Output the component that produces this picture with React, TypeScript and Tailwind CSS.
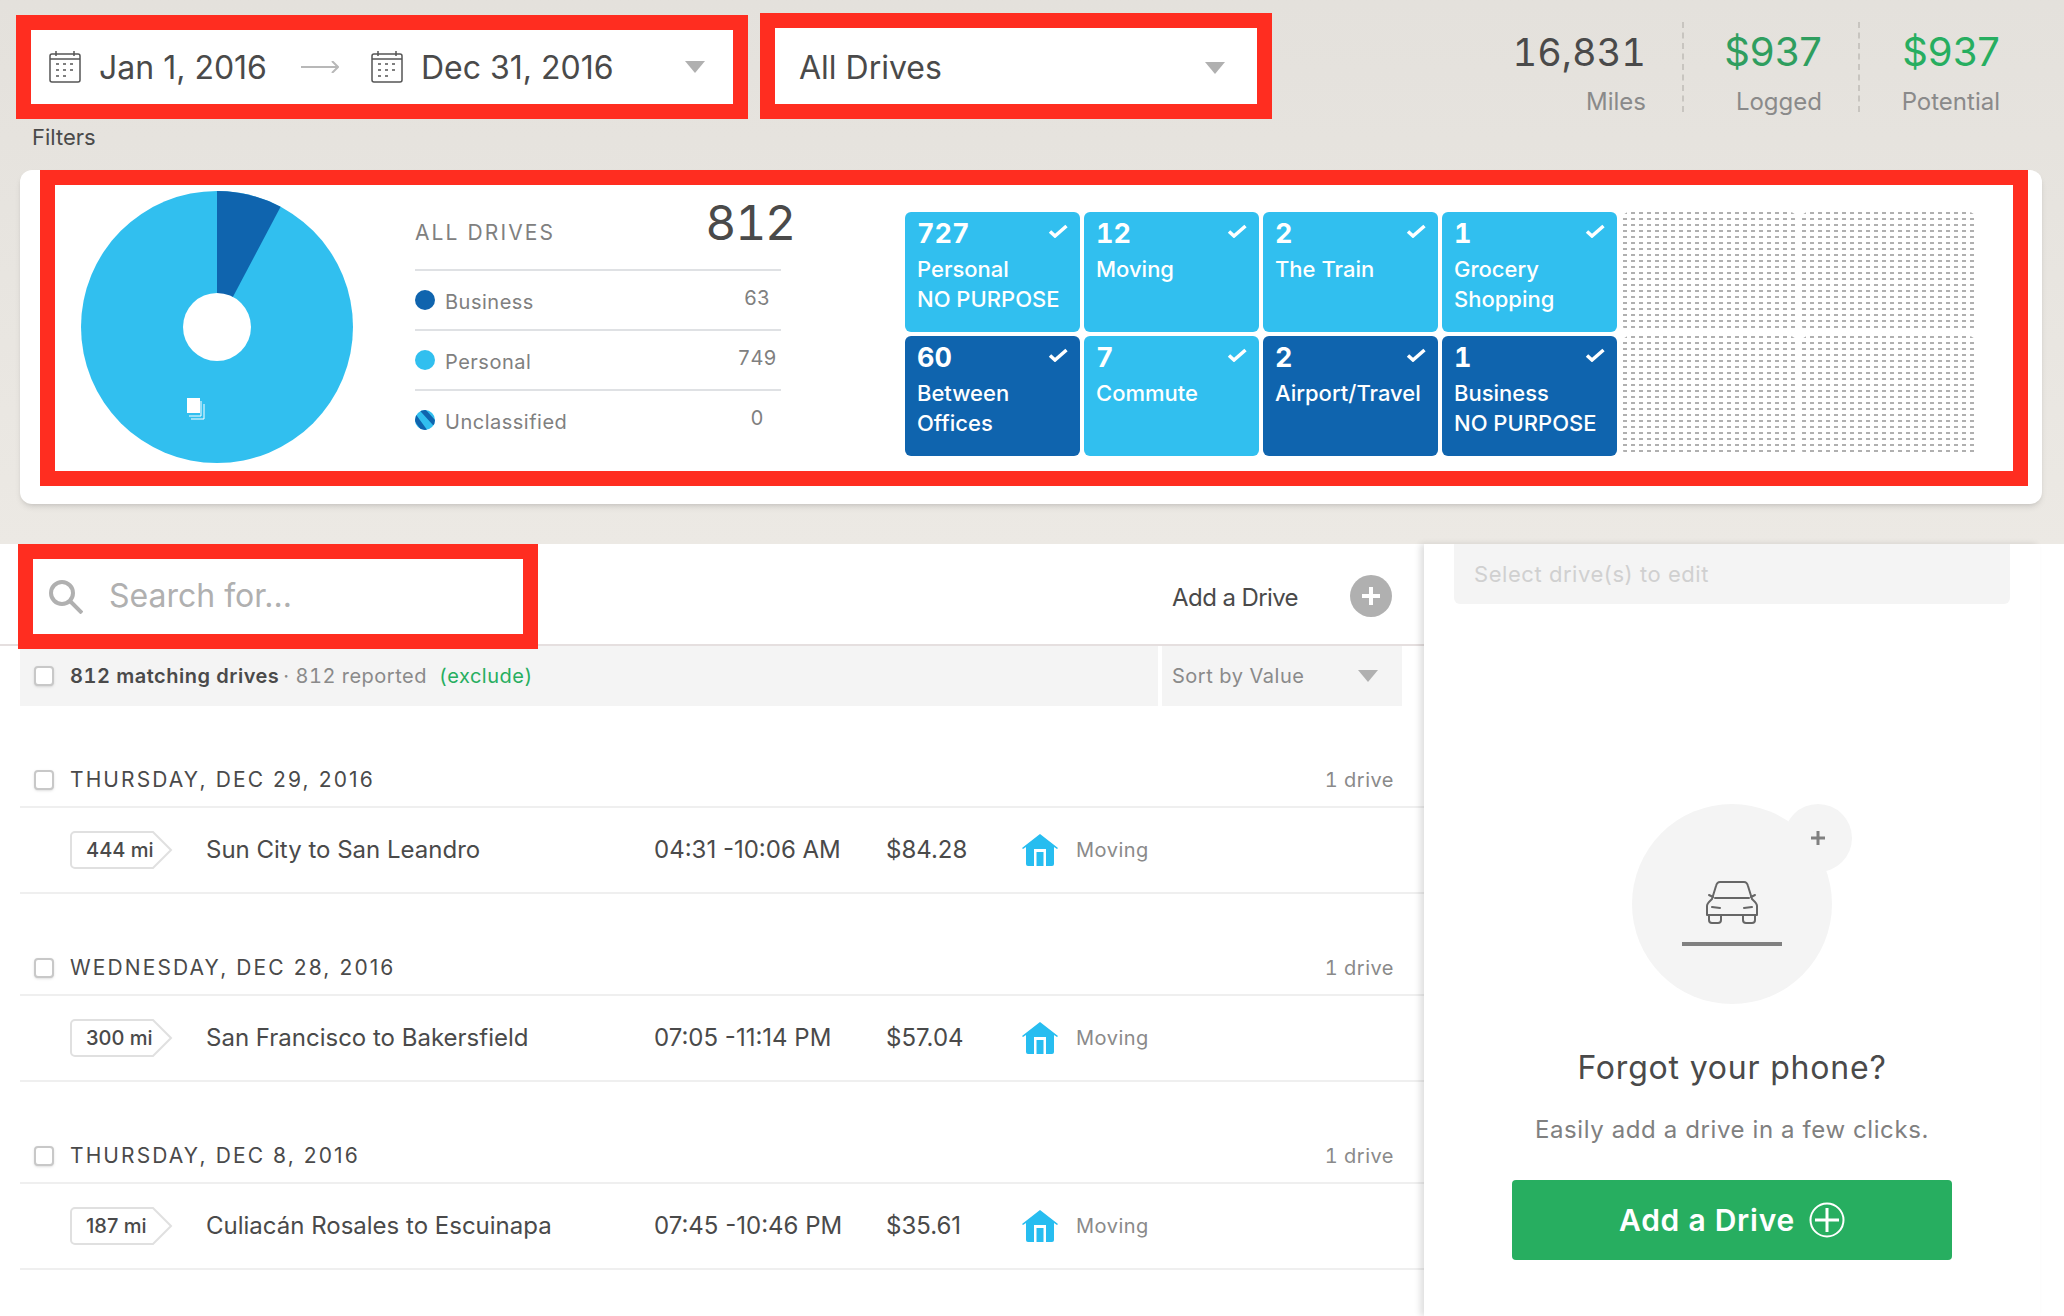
import React from "react";

const tiles = [
  { count: "727", lines: ["Personal", "NO PURPOSE"], dark: false },
  { count: "12", lines: ["Moving"], dark: false },
  { count: "2", lines: ["The Train"], dark: false },
  { count: "1", lines: ["Grocery", "Shopping"], dark: false },
  { count: "60", lines: ["Between", "Offices"], dark: true },
  { count: "7", lines: ["Commute"], dark: false },
  { count: "2", lines: ["Airport/Travel"], dark: true },
  { count: "1", lines: ["Business", "NO PURPOSE"], dark: true },
];

const drives = [
  { day: "Thursday, Dec 29, 2016", miles: "444 mi", route: "Sun City to San Leandro", time: "04:31 -10:06 AM", value: "$84.28" },
  { day: "Wednesday, Dec 28, 2016", miles: "300 mi", route: "San Francisco to Bakersfield", time: "07:05 -11:14 PM", value: "$57.04" },
  { day: "Thursday, Dec 8, 2016", miles: "187 mi", route: "Culiacán Rosales to Escuinapa", time: "07:45 -10:46 PM", value: "$35.61" },
];

function CalendarIcon() {
  return (
    <svg viewBox="0 0 32 32" className="h-8 w-8 shrink-0" fill="none" stroke="#555" strokeWidth="1.5">
      <rect x="1" y="3" width="30" height="28" rx="2" />
      <path d="M7 0v5M25 0v5M1 8h30" />
      <path d="M7 13h3M14 13h3M21 13h3M7 19h3M14 19h3M21 19h3M7 25h3M14 25h3" />
    </svg>
  );
}

function Caret({ className = "" }: { className?: string }) {
  return (
    <svg viewBox="0 0 20 12" className={`h-3 w-5 shrink-0 ${className}`}>
      <path d="M0 0h20L10 12z" fill="#b0b0b0" />
    </svg>
  );
}

function Check() {
  return (
    <svg viewBox="0 0 20 14" className="h-3.5 w-5">
      <path d="M2 7.5l5 4.5L18.5 2" fill="none" stroke="#fff" strokeWidth="3.5" />
    </svg>
  );
}

function Checkbox() {
  return <span className="h-5 w-5 shrink-0 rounded border-2 border-[#c8c8c8] bg-white shadow-sm" />;
}

function Pie() {
  return (
    <svg viewBox="0 0 272 272" className="h-68 w-68">
      <circle cx="136" cy="136" r="136" fill="#31bfef" />
      <path d="M136 136V0A136 136 0 0 1 199.6 15.8z" fill="#0f64ae" />
      <circle cx="136" cy="136" r="34" fill="#fff" />
      <path d="M120 210v15h-12M123 213v15h-13" fill="none" stroke="#fff" strokeWidth="1" />
      <rect x="106" y="207" width="13" height="15" fill="#fff" />
    </svg>
  );
}

function StripedDot() {
  return (
    <svg viewBox="0 0 20 20" className="h-5 w-5">
      <defs>
        <clipPath id="dot">
          <circle cx="10" cy="10" r="10" />
        </clipPath>
      </defs>
      <g clipPath="url(#dot)">
        <rect width="20" height="20" fill="#31bfef" />
        <path d="M-4 2L12 24M4 -4L24 18" stroke="#0f64ae" strokeWidth="5" />
      </g>
    </svg>
  );
}

function House() {
  return (
    <svg viewBox="0 0 36 32" className="h-8 w-9 shrink-0">
      <path d="M18 0L36 14l-1 1-3-2v17a2 2 0 0 1-2 2H6a2 2 0 0 1-2-2V13l-3 2-1-1z" fill="#27bdf0" />
      <path d="M12 32V15h12v17h-2.500V18h-7v14z" fill="#fff" />
    </svg>
  );
}

function Car() {
  return (
    <svg viewBox="0 0 52 44" className="h-11 w-13" fill="none" stroke="#666" strokeWidth="2" strokeLinecap="round" strokeLinejoin="round">
      <path d="M1 34V25c0-3 3-5 5-7l4-13c.5-2 2-4 4-4h24c2 0 3.500 2 4 4l4 13c2 2 5 4 5 7v9z" transform="translate(0 1)" />
      <path d="M9 18h34M7 17l-4-2M45 17l4-2M6 27l8 1M46 27l-8 1" />
      <path d="M3 35v5c0 2 1 3 3 3h6c2 0 3-1 3-3v-5M37 35v5c0 2 1 3 3 3h6c2 0 3-1 3-3v-5" />
    </svg>
  );
}

function Tile({ count, lines, dark }: { count: string; lines: string[]; dark: boolean }) {
  return (
    <div className={`relative rounded-md pl-3 pt-1.5 text-white ${dark ? "bg-[#0f64ae]" : "bg-[#31bfef]"}`}>
      <div className="text-[27px] leading-8 font-bold tabular-nums">{count}</div>
      <div className="mt-1 text-[22px] leading-7.5 font-medium whitespace-nowrap">
        {lines.map((line) => (
          <div key={line}>{line}</div>
        ))}
      </div>
      <div className="absolute right-3 top-3">
        <Check />
      </div>
    </div>
  );
}

function Placeholder() {
  return (
    <div className="ml-0.5 rounded-md bg-[#b0b0b0] bg-[linear-gradient(90deg,transparent_4px,white_4px),linear-gradient(transparent_2px,white_2px)] bg-size-[8px_6px]" />
  );
}

function LegendRow({ dot, label, value }: { dot: React.ReactNode; label: string; value: string }) {
  return (
    <div className="flex h-15 items-center border-t-2 border-[#dfe1e4]">
      {dot}
      <span className="ml-2.5 pt-1 text-xl tracking-wide text-[#808080]">{label}</span>
      <span className="ml-auto -mt-1 w-12 text-center text-xl tabular-nums text-[#808080]">{value}</span>
    </div>
  );
}

function Stat({ value, label, color, className }: { value: string; label: string; color: string; className: string }) {
  return (
    <div className={`h-[90px] text-right ${className}`}>
      <div className={`pt-2.5 leading-10 ${color}`}>{value}</div>
      <div className="mt-3.5 text-2xl leading-8 text-[#8a8a8a]">{label}</div>
    </div>
  );
}

function DriveGroup({ day, miles, route, time, value }: (typeof drives)[number]) {
  return (
    <div className="mt-15">
      <div className="flex items-center border-b-2 border-[#efefef] pb-3 pl-3.5 pr-7.5">
        <Checkbox />
        <span className="ml-4 text-[21px] leading-7 tracking-widest uppercase">{day}</span>
        <span className="ml-auto text-xl leading-7 tracking-wide tabular-nums text-[#8a8a8a]">1 drive</span>
      </div>
      <div className="border-b-2 border-[#efefef] py-5 pl-12.5">
        <div className="flex h-11 items-center">
          <div className="relative flex h-10 w-26 shrink-0 items-center pl-4 text-xl font-medium">
            <svg viewBox="0 0 104 40" className="absolute inset-0 h-10 w-26" fill="none">
              <path d="M5 2H83L101 20L83 38H5a4 4 0 0 1-4-4V6a4 4 0 0 1 4-4z" stroke="#e0e0e0" strokeWidth="2" />
            </svg>
            <span className="relative">{miles}</span>
          </div>
          <div className="ml-8 w-112 text-2xl">{route}</div>
          <div className="w-58 text-2xl">{time}</div>
          <div className="w-34 text-2xl">{value}</div>
          <div className="flex items-center gap-4.5">
            <House />
            <span className="text-xl tracking-wide text-[#8a8a8a]">Moving</span>
          </div>
        </div>
      </div>
    </div>
  );
}

export default function App() {
  return (
    <div className="h-screen w-full overflow-hidden bg-white font-[Inter,sans-serif] text-[#4a4a4a]">
      <div className="h-136 bg-linear-to-b from-[#e4e1dc] to-[#ece9e4]">
        <div className="flex h-[119px]">
          <div className="flex items-end gap-3 pl-4">
            <div className="flex h-26 w-183 items-center border-15 border-[#ff2d20] bg-white pl-4.5 pr-7 text-[32px]">
              <CalendarIcon />
              <span className="ml-4.5 mt-0.5 w-48">Jan 1, 2016</span>
              <svg viewBox="0 0 38 12" className="ml-2.5 mr-8 h-3 w-9.5" fill="none" stroke="#b8b8b8" strokeWidth="2">
                <path d="M0 6h37M31 0l6 6-6 6" />
              </svg>
              <CalendarIcon />
              <span className="ml-4.5 mt-0.5">Dec 31, 2016</span>
              <Caret className="ml-auto" />
            </div>
            <div className="flex h-26.5 w-128 items-center border-15 border-[#ff2d20] bg-white pl-6 pr-8 text-[32px]">
              <span className="mt-1">All Drives</span>
              <Caret className="ml-auto mt-1" />
            </div>
          </div>
          <div className="ml-auto flex items-start pr-16 pt-5.5">
            <Stat
              value="16,831"
              label="Miles"
              color="text-[38px] tabular-nums text-[#4a4a4a]"
              className="border-r-2 border-dashed border-[#c8c5c0] pr-9"
            />
            <Stat
              value="$937"
              label="Logged"
              color="text-[40px] text-[#2f9e5f]"
              className="w-44 border-r-2 border-dashed border-[#c8c5c0] pr-9"
            />
            <Stat value="$937" label="Potential" color="text-[40px] text-[#27ae60]" className="w-35" />
          </div>
        </div>
        <div className="mt-1 mb-[19px] pl-8 text-[22px] leading-7">Filters</div>
        <div className="ml-5 mr-5.5 h-83.5 rounded-xl bg-white pl-5 pr-3.5 shadow-md">
          <div className="flex h-79 border-15 border-[#ff2d20] bg-white">
            <div className="w-90 shrink-0 pl-6.5 pt-1.5">
              <Pie />
            </div>
            <div className="mt-3.5 w-91.5 shrink-0">
              <div className="flex items-end justify-between pb-5.5">
                <span className="text-[21px] leading-7 tracking-widest text-[#808080]">ALL DRIVES</span>
                <span className="-mr-3.5 text-5xl leading-none tracking-tight tabular-nums">812</span>
              </div>
              <LegendRow dot={<span className="h-5 w-5 rounded-full bg-[#0f64ae]" />} label="Business" value="63" />
              <LegendRow dot={<span className="h-5 w-5 rounded-full bg-[#31bfef]" />} label="Personal" value="749" />
              <LegendRow dot={<StripedDot />} label="Unclassified" value="0" />
            </div>
            <div className="ml-31 mt-[27px] grid h-61 w-[1070px] grid-cols-6 grid-rows-2 gap-1">
              {tiles.slice(0, 4).map((t, i) => (
                <Tile key={i} {...t} />
              ))}
              <Placeholder />
              <Placeholder />
              {tiles.slice(4).map((t, i) => (
                <Tile key={i} {...t} />
              ))}
              <Placeholder />
              <Placeholder />
            </div>
          </div>
        </div>
      </div>

      <div className="flex">
        <div className="min-w-0 flex-1">
          <div className="flex h-[102px] items-start border-b-2 border-[#e5dfdf] pl-4.5">
            <div className="relative z-10 flex h-[105px] w-130 items-center border-15 border-[#ff2d20] bg-white pl-4 text-[32px] text-[#b0b0b0]">
              <svg viewBox="0 0 34 34" className="h-8.5 w-8.5" fill="none" stroke="#b0b0b0" strokeWidth="4">
                <circle cx="13" cy="13" r="11" />
                <path d="M21 21l12 12" />
              </svg>
              <span className="ml-6.5 pb-0.5">Search for...</span>
            </div>
            <div className="ml-auto flex h-full items-center gap-13 pr-8 pt-1 text-2xl">
              <span className="mt-1 tracking-tight">Add a Drive</span>
              <span className="flex h-10.5 w-10.5 items-center justify-center rounded-full bg-[#b0b0b0]">
                <svg viewBox="0 0 20 20" className="h-5 w-5" stroke="#fff" strokeWidth="4">
                  <path d="M10 1v18M1 10h18" />
                </svg>
              </span>
            </div>
          </div>
          <div className="flex h-15 gap-1 pl-5 pr-5.5">
            <div className="flex flex-1 items-center bg-[#f4f4f4] pl-3.5 text-xl tracking-wide tabular-nums">
              <Checkbox />
              <span className="ml-4 font-semibold">812 matching drives</span>
              <span className="ml-1 text-[#8a8a8a]">· 812 reported</span>
              <span className="ml-3 text-[#27ae60]">(exclude)</span>
            </div>
            <div className="flex w-60 items-center bg-[#f4f4f4] pl-2.5 pr-6 text-xl tracking-wide text-[#8a8a8a]">
              <span>Sort by Value</span>
              <Caret className="ml-auto" />
            </div>
          </div>
          <div className="pl-5">
            {drives.map((d) => (
              <DriveGroup key={d.day} {...d} />
            ))}
          </div>
        </div>

        <div className="relative z-20 mr-6 h-[772px] w-154 shrink-0 bg-white shadow-[-4px_0_6px_rgba(0,0,0,0.12)]">
          <div className="mx-7.5 flex h-15 items-center rounded-b-md bg-[#f4f4f4] pl-5 text-[22px] tracking-wide text-[#d0d0d0]">
            Select drive(s) to edit
          </div>
          <div className="relative mx-auto mt-50 flex h-50 w-50 flex-col items-center rounded-full bg-[#f4f4f4] pt-19">
            <div className="absolute -right-5 top-0 flex h-17 w-17 items-center justify-center rounded-full bg-[#f4f4f4]">
              <svg viewBox="0 0 14 14" className="h-3.5 w-3.5" stroke="#808080" strokeWidth="3">
                <path d="M7 0v14M0 7h14" />
              </svg>
            </div>
            <Car />
            <div className="mt-4.5 h-1 w-25 bg-[#808080]" />
          </div>
          <div className="mt-11.5 text-center text-[32px] leading-9 tracking-wide">Forgot your phone?</div>
          <div className="mt-7 text-center text-2xl leading-8 tracking-wide text-[#808080]">Easily add a drive in a few clicks.</div>
          <div className="mx-auto mt-8.5 flex h-20 w-110 items-center justify-center gap-3.5 rounded bg-[#27ae60] text-3xl font-semibold tracking-wide text-white">
            <span>Add a Drive</span>
            <svg viewBox="0 0 36 36" className="h-9 w-9" fill="none" stroke="#fff" strokeWidth="2">
              <circle cx="18" cy="18" r="16.500" />
              <path d="M18 6v24M6 18h24" strokeWidth="3" />
            </svg>
          </div>
        </div>
      </div>
    </div>
  );
}
